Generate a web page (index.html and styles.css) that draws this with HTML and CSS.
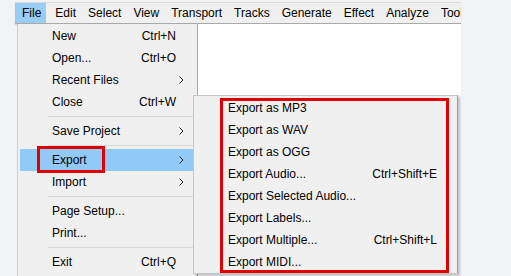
FILE: index.html
```html
<!DOCTYPE html>
<html lang="en">
  <head>
    <meta charset="UTF-8" />
    <meta name="viewport" content="width=device-width, initial-scale=1.0" />
    <title>Audacity - File menu</title>
    <link rel="stylesheet" href="styles.css">
  </head>
  <body>
    <div class="app">
      <div class="menubar">
        <span class="menubar-item open">File</span>
        <span class="menubar-item">Edit</span>
        <span class="menubar-item">Select</span>
        <span class="menubar-item">View</span>
        <span class="menubar-item">Transport</span>
        <span class="menubar-item">Tracks</span>
        <span class="menubar-item">Generate</span>
        <span class="menubar-item">Effect</span>
        <span class="menubar-item">Analyze</span>
        <span class="menubar-item">Tools</span>
      </div>

      <div class="workspace">
        <div class="file-menu">
          <div class="row"><span class="label">New</span><span class="key">Ctrl+N</span><span class="arrow"></span></div>
          <div class="row"><span class="label">Open...</span><span class="key">Ctrl+O</span><span class="arrow"></span></div>
          <div class="row"><span class="label">Recent Files</span><span class="arrow"><svg width="5" height="8" viewBox="0 0 5 8"><polyline points="0.5,0.5 4,4 0.5,7.5" /></svg></span></div>
          <div class="row"><span class="label">Close</span><span class="key">Ctrl+W</span><span class="arrow"></span></div>
          <div class="sep"></div>
          <div class="row"><span class="label">Save Project</span><span class="arrow"><svg width="5" height="8" viewBox="0 0 5 8"><polyline points="0.5,0.5 4,4 0.5,7.5" /></svg></span></div>
          <div class="sep"></div>
          <div class="row active marked"><span class="label">Export</span><span class="arrow"><svg width="5" height="8" viewBox="0 0 5 8"><polyline points="0.5,0.5 4,4 0.5,7.5" /></svg></span></div>
          <div class="row"><span class="label">Import</span><span class="arrow"><svg width="5" height="8" viewBox="0 0 5 8"><polyline points="0.5,0.5 4,4 0.5,7.5" /></svg></span></div>
          <div class="sep"></div>
          <div class="row"><span class="label">Page Setup...</span><span class="arrow"></span></div>
          <div class="row"><span class="label">Print...</span><span class="arrow"></span></div>
          <div class="sep"></div>
          <div class="row"><span class="label">Exit</span><span class="key">Ctrl+Q</span><span class="arrow"></span></div>
        </div>
        <div class="track"></div>
      </div>

      <!-- Export submenu -->
      <div class="submenu">
        <div class="sub-list">
          <div class="sub-row"><span class="label">Export as MP3</span></div>
          <div class="sub-row"><span class="label">Export as WAV</span></div>
          <div class="sub-row"><span class="label">Export as OGG</span></div>
          <div class="sub-row"><span class="label">Export Audio...</span><span class="key">Ctrl+Shift+E</span></div>
          <div class="sub-row"><span class="label">Export Selected Audio...</span></div>
          <div class="sub-row"><span class="label">Export Labels...</span></div>
          <div class="sub-row"><span class="label">Export Multiple...</span><span class="key">Ctrl+Shift+L</span></div>
          <div class="sub-row"><span class="label">Export MIDI...</span></div>
        </div>
      </div>
    </div>
  </body>
</html>
```

FILE: styles.css
```css
*,
*::before,
*::after {
  margin: 0;
  padding: 0;
  box-sizing: border-box;
}

body {
  background: #f2f3f5;
  font-family: "Liberation Sans", Arial, sans-serif;
  font-size: 12px;
  color: #000;
  overflow: hidden;
}

.app {
  position: relative;
  width: 446px;
  margin-left: 15px;
  padding-top: 2px;
}

.menubar {
  display: flex;
  height: 22px;
  background: #f0f0f0;
  border-top: 1px solid #dcdcdc;
  border-bottom: 1px solid #a9a9a9;
  box-shadow: 0 1px 1px rgba(0, 0, 0, 0.12);
  overflow: hidden;
  white-space: nowrap;
}

.menubar-item {
  padding: 0 6px;
  line-height: 20px;
}

.menubar-item.open {
  background: #99cdf5;
  padding: 0 5px 0 7px;
  margin-right: 3px;
}

.workspace {
  display: flex;
  align-items: flex-start;
}

.file-menu {
  width: 181px;
  margin-left: 2px;
  padding: 1px 0 3px;
  background: #f0f0f0;
  border-left: 1px solid #cfcfcf;
  border-right: 1px solid #a8a8a8;
}

.row {
  position: relative;
  display: flex;
  align-items: center;
  height: 22px;
  margin: 0 4px 0 2px;
  padding-left: 32px;
}

.row .label {
  flex: 1;
}

.row .arrow {
  width: 17px;
  padding-left: 3px;
  display: flex;
  align-items: center;
}

.arrow polyline {
  fill: none;
  stroke: #222;
  stroke-width: 1;
}

.row.active {
  background: #91c9f7;
}

.marked::after {
  content: "";
  position: absolute;
  left: 17px;
  top: -3px;
  width: 68px;
  height: 27px;
  border: 3px solid #e00000;
}

.sep {
  height: 7px;
  margin: 0 4px 0 30px;
  background: linear-gradient(#d7d7d7, #d7d7d7) center / 100% 1px no-repeat;
}

.track {
  flex: 1;
  height: 71px;
  background: #fff;
}

.submenu {
  position: absolute;
  left: 178px;
  top: 95px;
  width: 265px;
  padding-top: 1px;
  background: #f0f0f0;
  border: 1px solid #c6c6c6;
  border-right-color: #9c9c9c;
  box-shadow: 2px 2px 2px rgba(0, 0, 0, 0.2);
}

.sub-list {
  position: relative;
}

.sub-list::after {
  content: "";
  position: absolute;
  left: 26px;
  right: 8px;
  top: 1px;
  bottom: 0;
  border: 3px solid #e00000;
}

.sub-row {
  display: flex;
  align-items: center;
  height: 22px;
  padding: 0 20px 0 34px;
}

.sub-row .label {
  flex: 1;
}
```
